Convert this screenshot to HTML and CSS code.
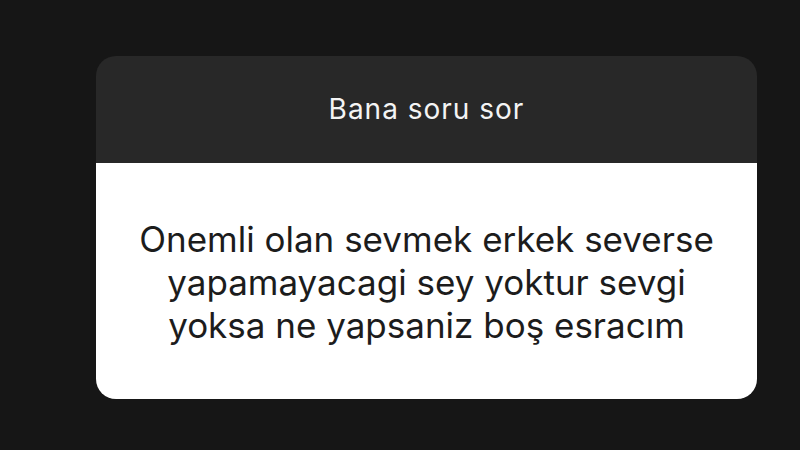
FILE: index.html
```html
<!DOCTYPE html>
<html lang="tr">
<head>
    <meta charset="UTF-8">
    <meta name="viewport" content="width=device-width, initial-scale=1.0">
    <title>Bana soru sor</title>
    <link rel="stylesheet" href="styles.css">
</head>
<body>
    <div class="card">
        <!-- Question sticker header -->
        <div class="card-head">Bana soru sor</div>
        <!-- Answer -->
        <div class="card-body">
            <p>Onemli olan sevmek erkek severse<br>yapamayacagi sey yoktur sevgi<br>yoksa ne yapsaniz boş esracım</p>
        </div>
    </div>
</body>
</html>
```

FILE: styles.css
```css
html, body {
    height: 100%;
}
body {
    margin: 0;
    background-color: #161616;
    font-family: Inter, "Noto Sans", sans-serif;
    padding-top: 56px;
    box-sizing: border-box;
}
.card {
    width: 661px;
    margin-left: 96px;
    border-radius: 20px;
    overflow: hidden;
}
.card-head {
    background-color: #282828;
    color: #f4f4f4;
    height: 107px;
    display: flex;
    align-items: center;
    justify-content: center;
    font-size: 28px;
    letter-spacing: 1px;
    padding-bottom: 1px;
    box-sizing: border-box;
}
.card-body {
    background: #fff;
    height: 236px;
    display: flex;
    align-items: center;
    justify-content: center;
    padding-top: 3px;
    box-sizing: border-box;
}
.card-body p {
    margin: 0;
    text-align: center;
    color: #1c1c1c;
    font-size: 35px;
    line-height: 43px;
}
```
